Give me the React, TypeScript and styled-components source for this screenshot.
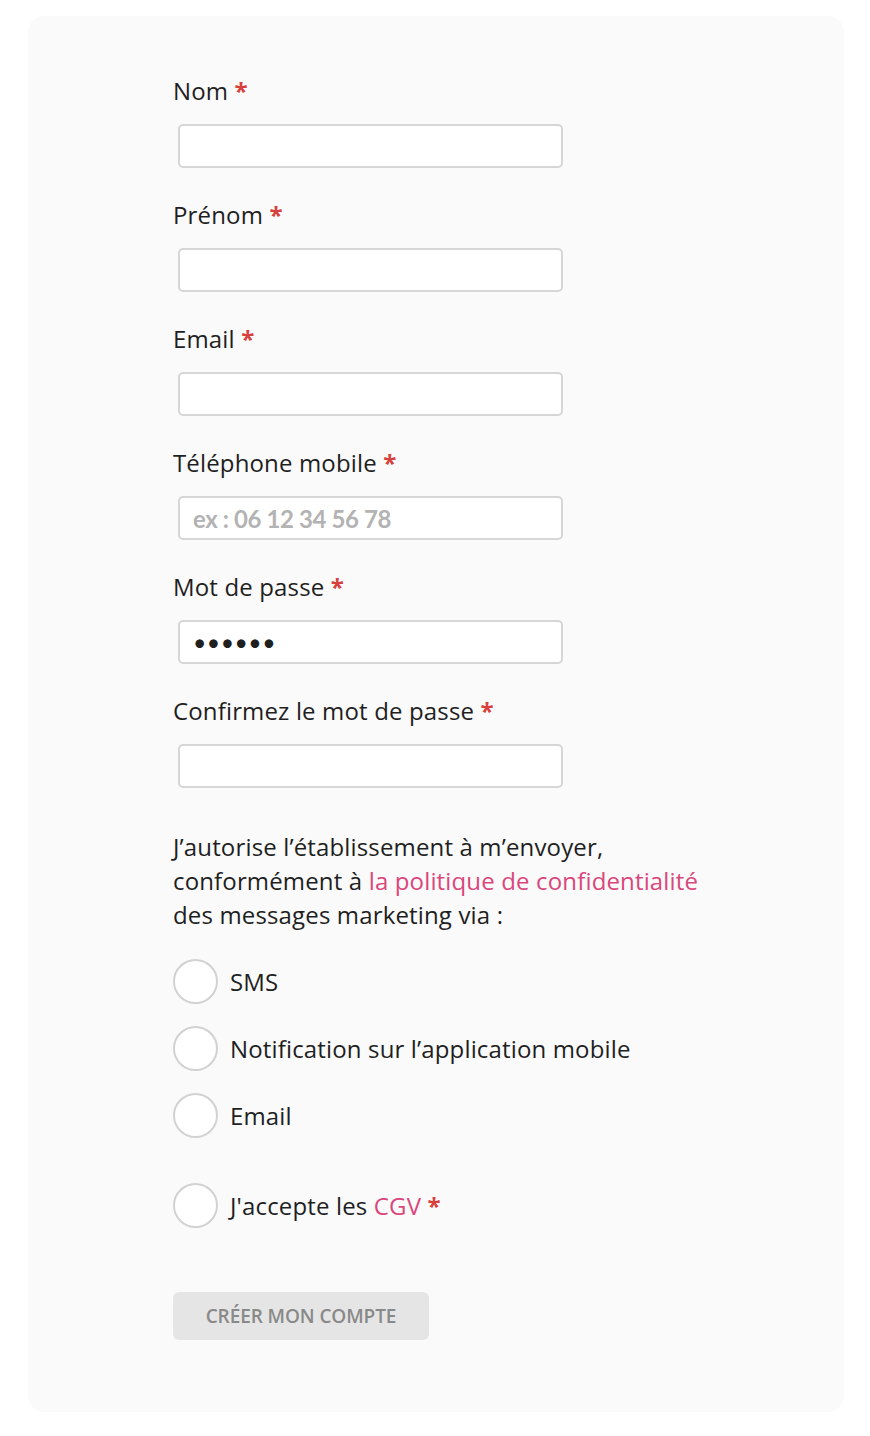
import React from "react";
import styled, { createGlobalStyle } from "styled-components";

const Global = createGlobalStyle`
  html, body { margin: 0; padding: 0; background: #ffffff; }
  body { font-family: "Open Sans", "Liberation Sans", sans-serif; color: #1f1f1f; }
  * { box-sizing: border-box; }
`;

const Page = styled.div`
  padding: 16px 26px 24px 28px;
`;

const Card = styled.form`
  width: 816px;
  background: #fafafa;
  border-radius: 16px;
  padding: 60px 40px 72px 145px;
  display: flex;
  flex-direction: column;
`;

const Field = styled.div`
  display: flex;
  flex-direction: column;
  margin-bottom: 32px;
`;

const Label = styled.label`
  font-size: 24px;
  letter-spacing: 0.15px;
  line-height: 30px;
  color: #1f1f1f;
  margin-bottom: 18px;
`;

const Star = styled.span`
  color: #d8403c;
  font-weight: 700;
`;

const Input = styled.input<{ $dots?: boolean }>`
  width: 385px;
  height: 44px;
  margin-left: 5px;
  border: 2px solid #d6d6d6;
  border-radius: 5px;
  background: #ffffff;
  padding: 0 13px;
  font-family: "Lato", "Open Sans", sans-serif;
  font-size: ${(p) => (p.$dots ? "23px" : "24px")};
  letter-spacing: ${(p) => (p.$dots ? "0.5px" : "normal")};
  color: #1f1f1f;
  outline: none;
  &::placeholder {
    color: #b3b3b3;
    font-weight: 700;
    letter-spacing: -0.4px;
  }
`;

const Consent = styled.p`
  margin: 10px 0 27px;
  font-size: 24px;
  letter-spacing: 0.15px;
  line-height: 34px;
  color: #1f1f1f;
`;

const Link = styled.a`
  color: #d9477c;
  text-decoration: none;
`;

const Options = styled.div`
  display: flex;
  flex-direction: column;
  gap: 22px;
`;

const Option = styled.label<{ $spaced?: boolean }>`
  display: flex;
  align-items: center;
  gap: 12px;
  font-size: 24px;
  letter-spacing: 0.15px;
  line-height: 30px;
  color: #1f1f1f;
  margin-top: ${(p) => (p.$spaced ? "23px" : "0")};
`;

const Circle = styled.span`
  width: 45px;
  height: 45px;
  flex: none;
  border-radius: 50%;
  border: 2px solid #d2d2d2;
  background: #ffffff;
`;

const Submit = styled.button`
  margin-top: 64px;
  align-self: flex-start;
  width: 256px;
  height: 48px;
  border: none;
  border-radius: 6px;
  background: #e5e5e5;
  color: #898989;
  font-family: "Open Sans", "Liberation Sans", sans-serif;
  font-weight: 600;
  font-size: 19px;
  letter-spacing: -0.1px;
  text-transform: uppercase;
  cursor: default;
`;

const fields: { label: string; type?: string; placeholder?: string; value?: string }[] = [
  { label: "Nom" },
  { label: "Prénom" },
  { label: "Email" },
  { label: "Téléphone mobile", placeholder: "ex : 06 12 34 56 78" },
  { label: "Mot de passe", type: "password", value: "123456" },
  { label: "Confirmez le mot de passe", type: "password" },
];

export default function App() {
  return (
    <Page>
      <Global />
      <Card onSubmit={(e) => e.preventDefault()}>
        {fields.map((f) => (
          <Field key={f.label}>
            <Label>
              {f.label} <Star>*</Star>
            </Label>
            <Input
              type={f.type || "text"}
              placeholder={f.placeholder}
              defaultValue={f.value}
              $dots={f.type === "password"}
            />
          </Field>
        ))}
        <Consent>
          J’autorise l’établissement à m’envoyer,
          <br />
          conformément à <Link href="#">la politique de confidentialité</Link>
          <br />
          des messages marketing via :
        </Consent>
        <Options>
          <Option>
            <Circle />
            SMS
          </Option>
          <Option>
            <Circle />
            Notification sur l’application mobile
          </Option>
          <Option>
            <Circle />
            Email
          </Option>
          <Option $spaced>
            <Circle />
            <span>
              J'accepte les <Link href="#">CGV</Link> <Star>*</Star>
            </span>
          </Option>
        </Options>
        <Submit type="submit">Créer mon compte</Submit>
      </Card>
    </Page>
  );
}
